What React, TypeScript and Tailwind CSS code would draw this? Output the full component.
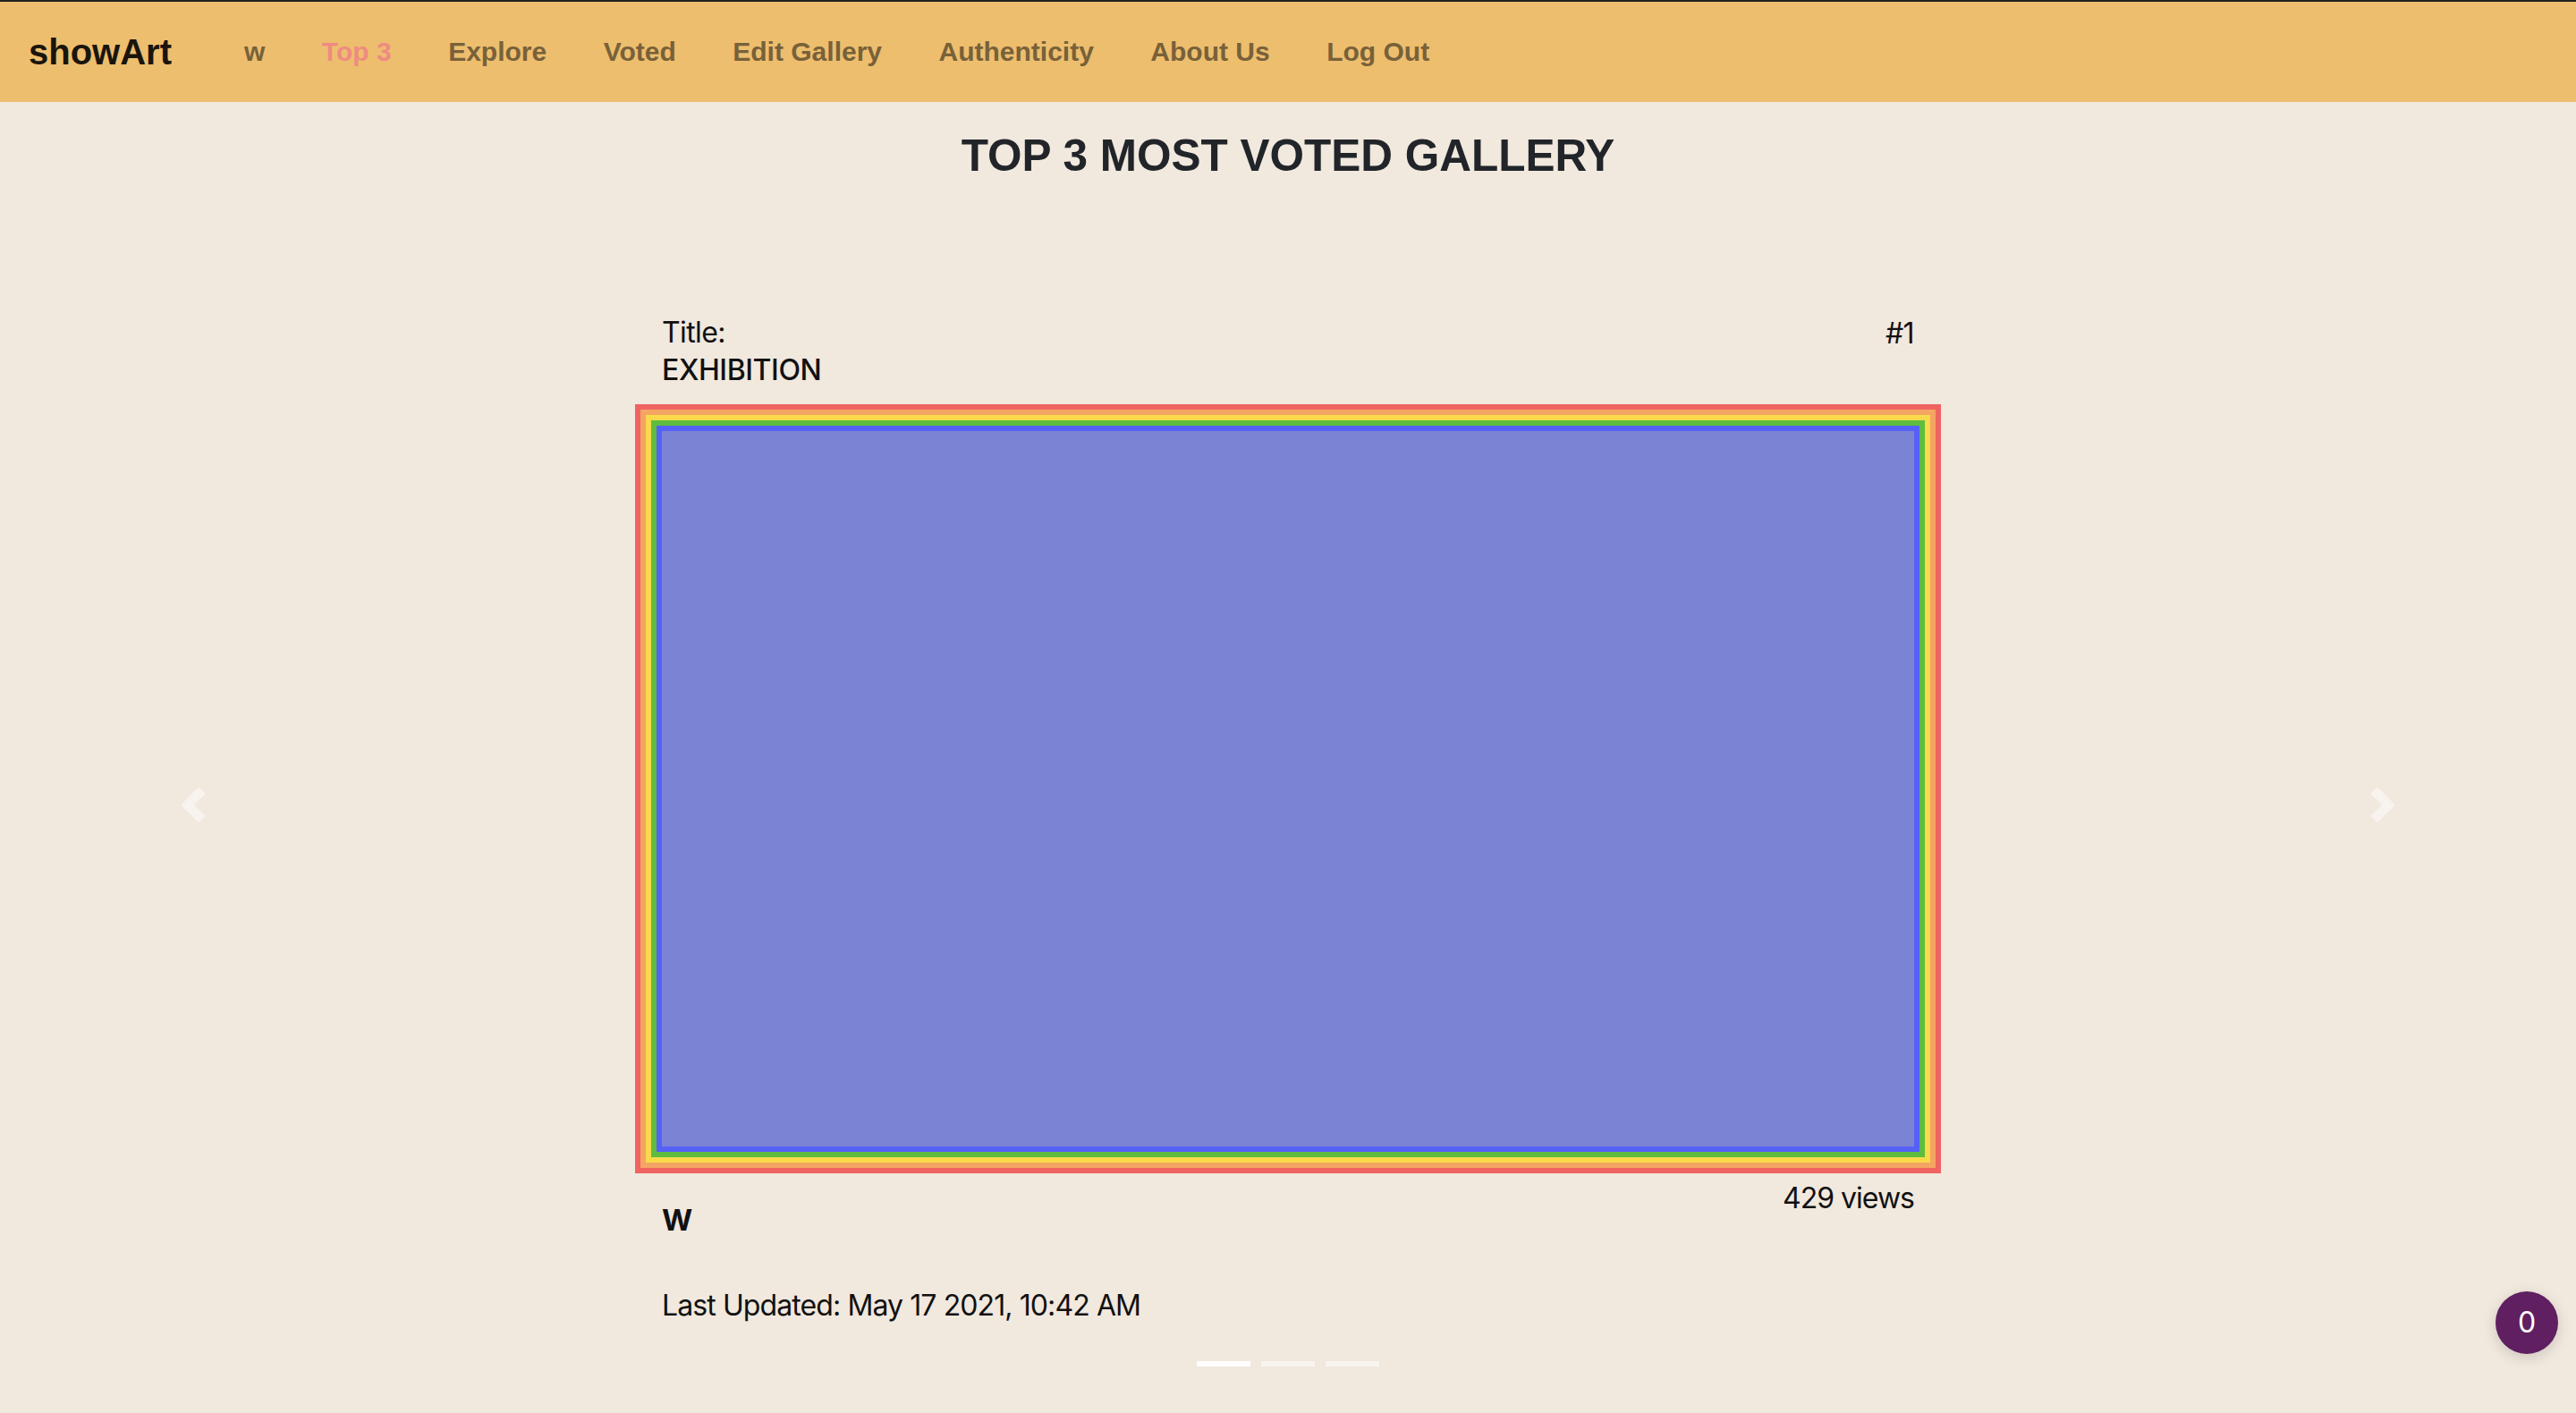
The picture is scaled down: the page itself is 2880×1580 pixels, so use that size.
import React from "react";

const links = ["w", "Top 3", "Explore", "Voted", "Edit Gallery", "Authenticity", "About Us", "Log Out"];

function Chevron({ dir }: { dir: "left" | "right" }) {
  return (
    <svg width="40" height="40" viewBox="0 0 8 8" className="opacity-50">
      {dir === "left" ? (
        <path fill="#fff" d="M5.25 0l-4 4 4 4 1.5-1.5L4.25 4l2.5-2.5L5.25 0z" />
      ) : (
        <path fill="#fff" d="M2.75 0l-1.5 1.5L3.75 4l-2.5 2.5L2.75 8l4-4-4-4z" />
      )}
    </svg>
  );
}

export default function App() {
  return (
    <div
      className="min-h-[1580px] bg-[#f1e8de] relative"
      style={{ fontFamily: "Inter, 'Noto Sans', sans-serif" }}
    >
      <nav
        className="h-[114px] border-t-2 border-[#212121] bg-[#edbe6e] flex items-center pl-[32px]"
        style={{ fontFamily: "'Liberation Sans', Arial, sans-serif" }}
      >
        <span className="text-[40px] leading-none font-bold text-[#1a150c]">showArt</span>
        <div className="flex items-center gap-[63.5px] ml-[81px]">
          {links.map((l) => (
            <span
              key={l}
              className={
                l === "Top 3"
                  ? "text-[30px] leading-none font-bold text-[#ef8b82]"
                  : "text-[30px] leading-none font-bold text-[#786139]"
              }
            >
              {l}
            </span>
          ))}
        </div>
      </nav>

      <h1
        className="mt-[35px] text-center text-[49.5px] leading-none font-bold text-[#212529] h-[71px]"
        style={{ fontFamily: "'Liberation Sans', Arial, sans-serif" }}
      >
        TOP 3 MOST VOTED GALLERY
      </h1>

      <div className="relative h-[1360px]">
        <div className="w-[1460px] mx-auto pt-[131px] text-[#111]">
          <div className="px-[30px] flex justify-between text-[32px] leading-[42px] tracking-[-0.6px]">
            <div className="flex flex-col">
              <span>Title:</span>
              <span className="font-medium tracking-[-0.4px]">EXHIBITION</span>
            </div>
            <span className="mt-[1px]">#1</span>
          </div>

          <div className="mt-[17px] border-[6px] border-[#ef6461]">
            <div className="border-[6px] border-[#f4a463]">
              <div className="border-[6px] border-[#f9da4b]">
                <div className="border-[6px] border-[#5ebd3f]">
                  <div className="border-[6px] border-[#5561f6]">
                    <div className="h-[800px] bg-[#7b84d4]" />
                  </div>
                </div>
              </div>
            </div>
          </div>

          <div className="px-[30px] flex justify-between text-[32px] leading-[42px]">
            <div className="flex flex-col">
              <span className="mt-[31px] font-bold text-[33px]">W</span>
              <span className="mt-[54px] tracking-[-0.9px]">Last Updated: May 17 2021, 10:42 AM</span>
            </div>
            <span className="mt-[7px] tracking-[-1px]">429 views</span>
          </div>
        </div>

        <div className="absolute left-0 top-0 bottom-0 w-[15%] flex items-center justify-center">
          <Chevron dir="left" />
        </div>
        <div className="absolute right-0 top-0 bottom-0 w-[15%] flex items-center justify-center">
          <Chevron dir="right" />
        </div>

        <div className="absolute left-0 right-0 bottom-[52px] flex justify-center gap-[12px]">
          <span className="w-[60px] h-[6px] bg-white" />
          <span className="w-[60px] h-[6px] bg-white opacity-50" />
          <span className="w-[60px] h-[6px] bg-white opacity-50" />
        </div>
      </div>

      <div className="absolute right-[20px] top-[1444px] w-[70px] h-[70px] rounded-full bg-[#5f1f60] flex items-center justify-center text-white text-[32px] shadow-[0_4px_16px_rgba(0,0,0,0.15)]">
        0
      </div>
    </div>
  );
}
